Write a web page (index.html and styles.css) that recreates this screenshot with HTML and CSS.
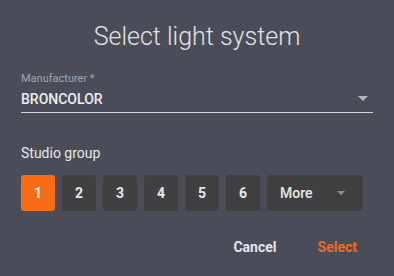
FILE: index.html
```html
<!DOCTYPE html>
<html>
<head>
<meta charset="utf-8">
<link rel="stylesheet" href="styles.css">
</head>
<body>
<div class="dialog">
  <h1 class="title">Select light system</h1>
  <div class="field">
    <div class="field-label">Manufacturer *</div>
    <div class="select">
      <span class="select-value">BRONCOLOR</span>
      <span class="caret"></span>
    </div>
  </div>
  <div class="group-label">Studio group</div>
  <div class="groups">
    <button class="grp active">1</button>
    <button class="grp">2</button>
    <button class="grp">3</button>
    <button class="grp">4</button>
    <button class="grp">5</button>
    <button class="grp">6</button>
    <button class="grp more"><span>More</span><span class="caret small"></span></button>
  </div>
  <div class="actions">
    <button class="act cancel">Cancel</button>
    <button class="act primary">Select</button>
  </div>
</div>
</body>
</html>
```

FILE: styles.css
```css
html, body {
  margin: 0;
  padding: 0;
  background: #4a4d58;
}
body {
  font-family: Roboto, "Liberation Sans", sans-serif;
  width: 394px;
  height: 276px;
  overflow: hidden;
}
.dialog {
  padding: 21px 21px 0 21px;
}
.title {
  margin: 0;
  font-weight: 300;
  font-size: 25px;
  line-height: 32px;
  color: #e2e3e7;
  text-align: center;
}
.field {
  margin-top: 19px;
}
.field-label {
  font-size: 11px;
  line-height: 13px;
  color: #a2a5ad;
}
.select {
  display: flex;
  align-items: center;
  justify-content: space-between;
  height: 27px;
  border-bottom: 1px solid #d4d6dc;
}
.select-value {
  font-size: 14px;
  font-weight: 500;
  color: #eceef2;
}
.caret {
  width: 0;
  height: 0;
  border-left: 5px solid transparent;
  border-right: 5px solid transparent;
  border-top: 5px solid #b5b8bf;
  margin-right: 5px;
}
.group-label {
  margin-top: 32px;
  font-size: 14px;
  line-height: 16px;
  color: #e6e8ec;
}
.groups {
  display: flex;
  gap: 7px;
  margin-top: 14px;
}
.grp {
  width: 34px;
  height: 36px;
  border: none;
  border-radius: 3px;
  background: #404043;
  color: #e8e8ea;
  font-family: inherit;
  font-size: 14px;
  font-weight: 700;
  padding: 0;
}
.grp.active {
  background: #f86c14;
  color: #fff4ec;
}
.grp.more {
  width: 96px;
  display: flex;
  align-items: center;
  justify-content: space-between;
  padding: 0 18px 0 13px;
  font-weight: 500;
  font-size: 14px;
}
.caret.small {
  border-left-width: 4px;
  border-right-width: 4px;
  border-top-width: 4px;
  border-top-color: #8e8f94;
  margin-right: 0;
}
.actions {
  display: flex;
  justify-content: flex-end;
  gap: 33px;
  margin-top: 22px;
  padding-right: 12px;
}
.act {
  background: none;
  border: none;
  font-family: inherit;
  font-size: 14px;
  font-weight: 700;
  padding: 6px 4px;
  line-height: 16px;
}
.act.cancel {
  color: #e3e5ea;
}
.act.primary {
  color: #ee6a1e;
}
```
